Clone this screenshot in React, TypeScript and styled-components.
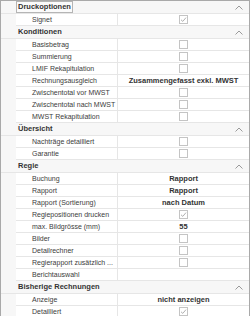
import React from 'react';
import styled, { createGlobalStyle } from 'styled-components';

const Global = createGlobalStyle`
  html, body { margin: 0; padding: 0; background: #ffffff; }
  body { font-family: "Liberation Sans", Arial, sans-serif; }
`;

type Value = { kind: 'check'; checked: boolean } | { kind: 'text'; text: string } | { kind: 'none' };
type Row = { label: string; value: Value };
type Group = { title: string; focused?: boolean; rows: Row[] };

const box = (checked = false): Value => ({ kind: 'check', checked });
const txt = (text: string): Value => ({ kind: 'text', text });

const groups: Group[] = [
  { title: 'Druckoptionen', focused: true, rows: [{ label: 'Signet', value: box(true) }] },
  {
    title: 'Konditionen',
    rows: [
      { label: 'Basisbetrag', value: box() },
      { label: 'Summierung', value: box() },
      { label: 'LMIF Rekapitulation', value: box() },
      { label: 'Rechnungsausgleich', value: txt('Zusammengefasst exkl. MWST') },
      { label: 'Zwischentotal vor MWST', value: box() },
      { label: 'Zwischentotal nach MWST', value: box() },
      { label: 'MWST Rekapitulation', value: box() },
    ],
  },
  {
    title: 'Übersicht',
    rows: [
      { label: 'Nachträge detailliert', value: box() },
      { label: 'Garantie', value: box() },
    ],
  },
  {
    title: 'Regie',
    rows: [
      { label: 'Buchung', value: txt('Rapport') },
      { label: 'Rapport', value: txt('Rapport') },
      { label: 'Rapport (Sortierung)', value: txt('nach Datum') },
      { label: 'Regiepositionen drucken', value: box(true) },
      { label: 'max. Bildgrösse (mm)', value: txt('55') },
      { label: 'Bilder', value: box() },
      { label: 'Detailrechner', value: box() },
      { label: 'Regierapport zusätzlich ...', value: box() },
      { label: 'Berichtauswahl', value: { kind: 'none' } },
    ],
  },
  {
    title: 'Bisherige Rechnungen',
    rows: [
      { label: 'Anzeige', value: txt('nicht anzeigen') },
      { label: 'Detailliert', value: box(true) },
    ],
  },
];

const Grid = styled.div`
  width: 250px;
  height: 316px;
  box-sizing: border-box;
  border: 1px solid #a9a9a9;
  border-bottom: none;
  background: #f7f7f7;
  overflow: hidden;
`;

const Header = styled.div`
  height: 13px;
  display: flex;
  align-items: center;
  padding-left: 15px;
  padding-right: 6px;
  background: #f7f7f7;
  border-bottom: 1px solid #e6e6e6;
  box-sizing: border-box;
`;

const Title = styled.span<{ $focused?: boolean }>`
  font-size: 7.5px;
  font-weight: bold;
  color: #333333;
  padding: 0 1px;
  line-height: 10px;
  border: 1px solid ${p => (p.$focused ? '#b5b5b5' : 'transparent')};
  background: ${p => (p.$focused ? '#fbfbfb' : 'transparent')};
`;

const Chevron = styled.svg`
  margin-left: auto;
  width: 8px;
  height: 5px;
`;

const Item = styled.div`
  height: 12px;
  margin-left: 15px;
  display: grid;
  grid-template-columns: 102px 1fr;
  background: #ffffff;
  border-bottom: 1px solid #e6e6e6;
  box-sizing: border-box;
`;

const Label = styled.div`
  font-size: 7px;
  color: #3c3c3c;
  padding-left: 16px;
  line-height: 11px;
  white-space: nowrap;
  overflow: hidden;
  border-right: 1px solid #e6e6e6;
`;

const ValueCell = styled.div`
  display: flex;
  align-items: center;
  justify-content: center;
  font-size: 7.5px;
  font-weight: bold;
  color: #333333;
  white-space: nowrap;
`;

const Check = styled.span`
  width: 9px;
  height: 9px;
  box-sizing: border-box;
  border: 1px solid #c4c4c4;
  background: #ffffff;
  display: flex;
  align-items: center;
  justify-content: center;
`;

function CheckBox({ checked }: { checked: boolean }) {
  return (
    <Check>
      {checked && (
        <svg width="7" height="7" viewBox="0 0 7 7">
          <path d="M1 3.8 L2.8 5.4 L6 1.6" fill="none" stroke="#a8a8a8" strokeWidth="0.9" />
        </svg>
      )}
    </Check>
  );
}

export default function App() {
  return (
    <Grid>
      <Global />
      {groups.map(g => (
        <div key={g.title}>
          <Header>
            <Title $focused={g.focused}>{g.title}</Title>
            <Chevron viewBox="0 0 8 5">
              <path d="M0.5 4.5 L4 1 L7.5 4.5" fill="none" stroke="#9a9a9a" strokeWidth="1" />
            </Chevron>
          </Header>
          {g.rows.map(r => (
            <Item key={r.label}>
              <Label>{r.label}</Label>
              <ValueCell>
                {r.value.kind === 'check' && <CheckBox checked={r.value.checked} />}
                {r.value.kind === 'text' && r.value.text}
              </ValueCell>
            </Item>
          ))}
        </div>
      ))}
    </Grid>
  );
}
